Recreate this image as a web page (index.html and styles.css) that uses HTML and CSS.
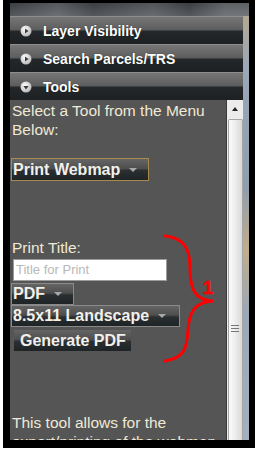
FILE: index.html
```html
<!DOCTYPE html>
<html>
<head>
<meta charset="utf-8">
<link rel="stylesheet" href="styles.css">
</head>
<body>
<div class="frame">
  <div class="map-top"></div>
  <div class="main">
    <div class="accordion">
      <div class="header">
        <svg class="hicon" width="12" height="12" viewBox="0 0 12 12"><defs><radialGradient id="g1" cx="40%" cy="35%" r="70%"><stop offset="0" stop-color="#ffffff"/><stop offset="1" stop-color="#b4b4b4"/></radialGradient></defs><circle cx="6" cy="6" r="5.5" fill="url(#g1)"/><polygon points="5,3.4 8.6,6 5,8.6" fill="#3a3a3a"/></svg>
        <span>Layer Visibility</span>
      </div>
      <div class="header">
        <svg class="hicon" width="12" height="12" viewBox="0 0 12 12"><circle cx="6" cy="6" r="5.5" fill="url(#g1)"/><polygon points="5,3.4 8.6,6 5,8.6" fill="#3a3a3a"/></svg>
        <span>Search Parcels/TRS</span>
      </div>
      <div class="header">
        <svg class="hicon" width="12" height="12" viewBox="0 0 12 12"><circle cx="6" cy="6" r="5.5" fill="url(#g1)"/><polygon points="3.4,5 8.6,5 6,8.4" fill="#3a3a3a"/></svg>
        <span>Tools</span>
      </div>
      <div class="content">
        <div class="pane">
          <p class="txt intro">Select a Tool from the Menu Below:</p>
          <div class="btn btn-gold w-webmap"><span>Print Webmap</span><i class="arrow"></i></div>
          <p class="txt label">Print Title:</p>
          <div class="input">Title for Print</div>
          <div class="btn w-pdf"><span>PDF</span><i class="arrow"></i></div>
          <div class="btn w-land"><span>8.5x11 Landscape</span><i class="arrow"></i></div>
          <div class="btn btn-plain w-gen"><span>Generate PDF</span></div>
          <p class="txt desc">This tool allows for the export/printing of the webmap to a PDF document.</p>
        </div>
        <div class="scrollbar">
          <div class="sb-up"></div>
          <div class="sb-thumb"><div class="grip"></div></div>
        </div>
      </div>
    </div>
    <div class="map-side"></div>
  </div>
  <svg class="annot" width="261" height="454" viewBox="0 0 261 454">
    <path d="M165,236 C185,238 190,250 190,268 C190,290 195,300 213,301 C195,302 189,312 188,330 C187,350 183,358 165,361" fill="none" stroke="#ff0000" stroke-width="3" stroke-linecap="round"/>
    <text x="203" y="294" class="num" font-family="Liberation Sans, Arial, sans-serif" font-weight="bold" font-size="18">1</text>
  </svg>
</div>
</body>
</html>
```

FILE: styles.css
```css
html, body {
  margin: 0;
  padding: 0;
  background: #ffffff;
}
.frame {
  position: relative;
  margin-left: 3px;
  width: 239px;
  border-style: solid;
  border-color: #000;
  border-width: 3px 6px 8px 7px;
  display: flex;
  flex-direction: column;
  font-family: "Liberation Sans", Arial, sans-serif;
}
.map-top {
  height: 13px;
  background:
    linear-gradient(90deg, rgba(255,255,255,0) 0, rgba(255,255,255,0.14) 20%, rgba(255,255,255,0) 35%, rgba(255,255,255,0.12) 60%, rgba(255,255,255,0) 75%, rgba(255,255,255,0.18) 90%),
    linear-gradient(#3a3e42, #55595d);
}
.main {
  display: flex;
}
.accordion {
  width: 233px;
  display: flex;
  flex-direction: column;
}
.map-side {
  width: 6px;
  background: linear-gradient(#b4a890 0, #9aa8b8 12%, #8e9db0 40%, #c2ad88 55%, #9aa8b8 70%, #a3b0c0 100%);
}
.header {
  height: 27px;
  border-top: 1px solid #8e8e8e;
  display: flex;
  align-items: center;
  padding-left: 10px;
  gap: 11px;
  background: linear-gradient(#767676 0, #5e5e5e 46%, #3d4143 50%, #23272a 54%, #1d2124 100%);
  color: #ffffff;
  font-weight: bold;
  font-size: 14px;
  text-shadow: 0 0 1px rgba(0,0,0,0.7);
}
.hicon {
  display: block;
  flex: none;
}
.content {
  display: flex;
  height: 340px;
}
.pane {
  width: 215px;
  padding-left: 1px;
  background: #555555;
  overflow: hidden;
  display: flex;
  flex-direction: column;
  align-items: flex-start;
}
.pane > * {
  flex: none;
}
.txt {
  margin: 0;
  padding-left: 1px;
  color: #efe9d6;
  font-size: 15.5px;
  line-height: 19px;
}
.intro {
  margin-top: 1px;
}
.btn {
  box-sizing: border-box;
  height: 22px;
  border: 1px solid #8a8a8a;
  background: linear-gradient(#656565 0, #4e4e4e 45%, #2a2f32 55%, #1e2326 100%);
  color: #f2f0ea;
  font-weight: bold;
  font-size: 16px;
  display: flex;
  align-items: center;
  padding-left: 1px;
  gap: 9px;
}
.btn-gold {
  border-color: #a88a4c;
  height: 23px;
  margin-top: 19px;
}
.btn-plain {
  border: none;
  padding-left: 6px;
  margin-top: 3px;
  margin-left: 3px;
  height: 21px;
}
.arrow {
  width: 0;
  height: 0;
  border-left: 4px solid transparent;
  border-right: 4px solid transparent;
  border-top: 4px solid #a8a8a8;
}
.w-webmap { width: 138px; }
.w-pdf { width: 63px; }
.w-land { width: 169px; }
.w-gen { width: 117px; }
.label {
  margin-top: 57px;
}
.input {
  box-sizing: border-box;
  margin-top: 2px;
  margin-left: 2px;
  width: 154px;
  height: 22px;
  background: #ffffff;
  border: 1px solid #9c9c9c;
  color: #b8b8b8;
  font-size: 13px;
  line-height: 20px;
  padding-left: 2px;
  margin-bottom: 2px;
}
.desc {
  margin-top: 62px;
  width: 210px;
}
.scrollbar {
  width: 17px;
  box-sizing: border-box;
  border-left: 1px solid #3a3a3a;
  background: #ececec;
  display: flex;
  flex-direction: column;
  align-items: center;
}
.sb-up {
  margin-top: 7px;
  width: 0;
  height: 0;
  border-left: 3px solid transparent;
  border-right: 3px solid transparent;
  border-bottom: 4px solid #222;
}
.sb-thumb {
  margin-top: 8px;
  box-sizing: border-box;
  width: 15px;
  flex: 1;
  border: 1px solid #a6a6a6;
  border-bottom: none;
  border-radius: 2px 2px 0 0;
  background: linear-gradient(90deg, #fafafa 0, #f0f0f0 40%, #d8d8d8 100%);
  display: flex;
  justify-content: center;
  padding-top: 205px;
}
.grip {
  width: 8px;
  height: 9px;
  background: repeating-linear-gradient(#777 0, #777 1px, transparent 1px, transparent 3px);
}
.annot {
  position: absolute;
  left: -10px;
  top: -3px;
  pointer-events: none;
}
.num {
  fill: #ff0000;
  stroke: #ff0000;
  stroke-width: 0.6px;
}
```
